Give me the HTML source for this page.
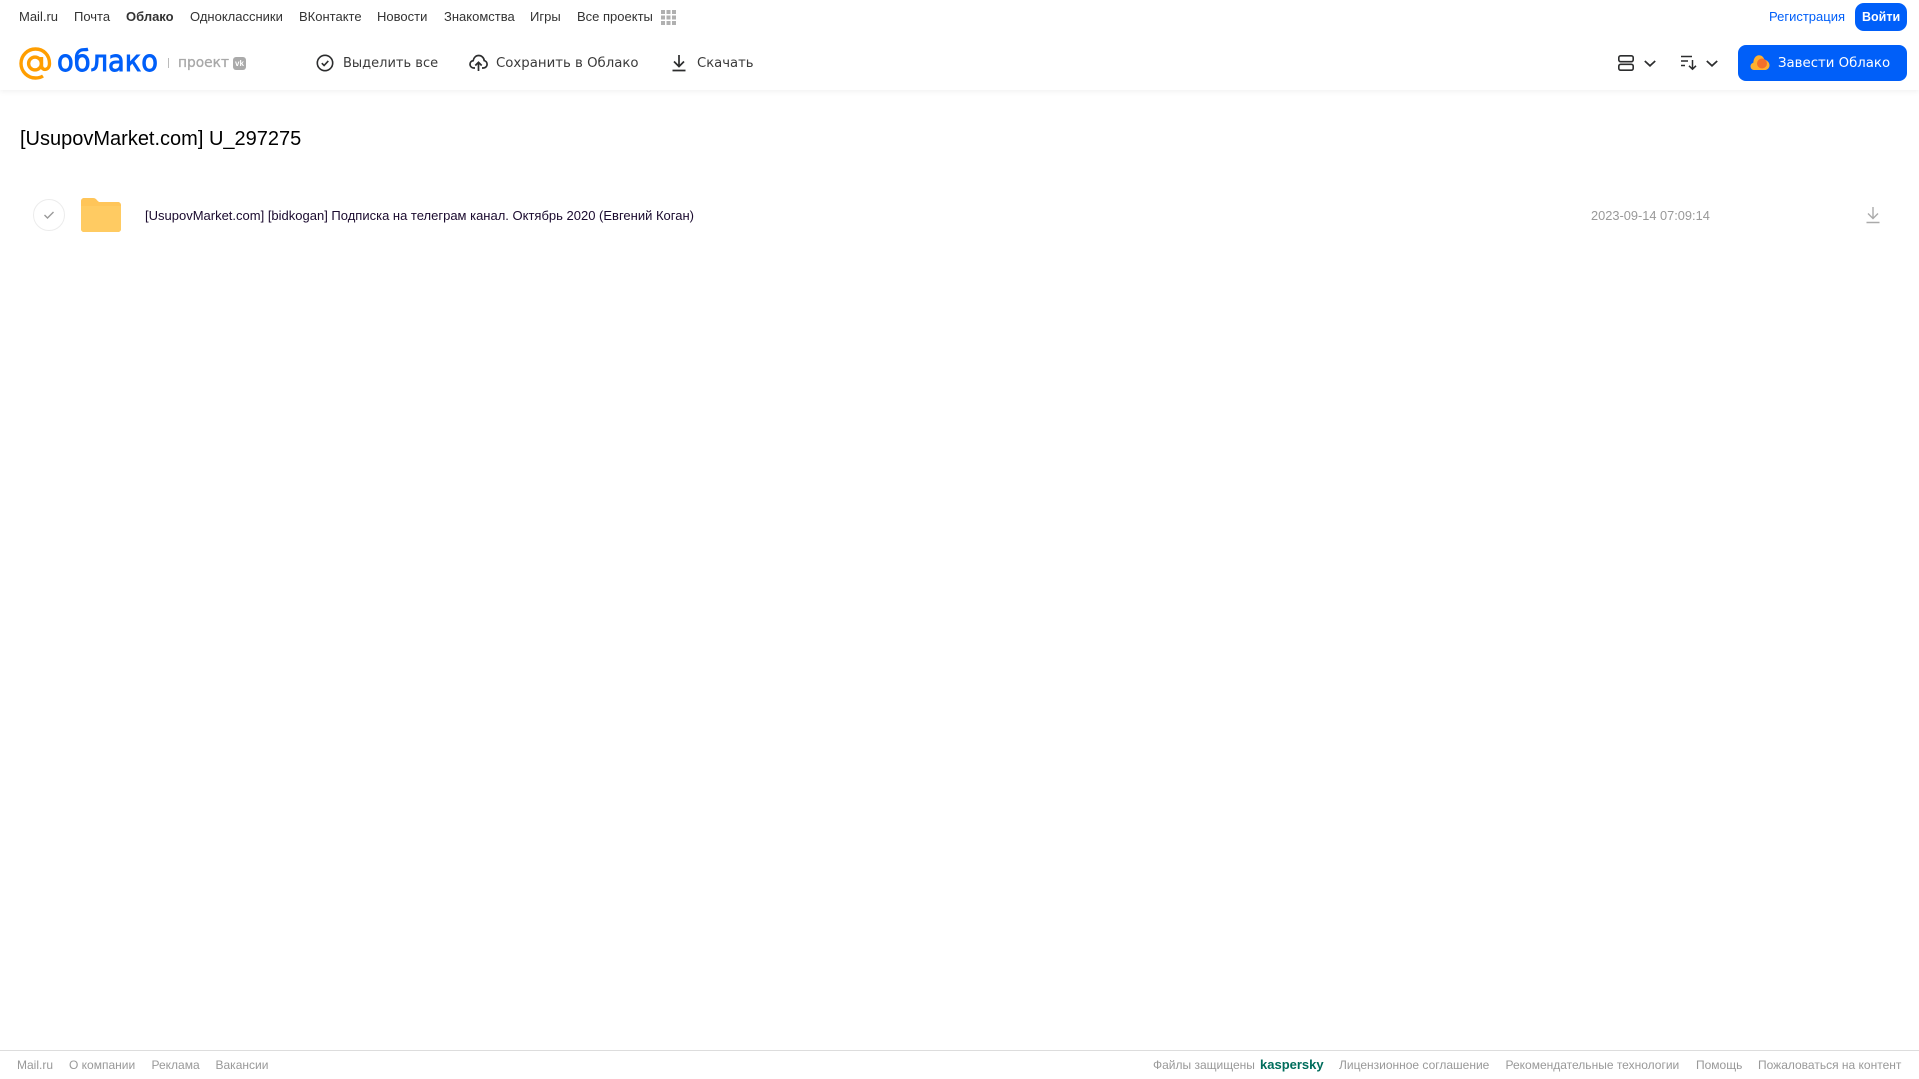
<!DOCTYPE html>
<html lang="ru"><head><meta charset="utf-8"><title>Облако</title>
<style>
html,body{margin:0;padding:0;background:#fff;width:1919px;height:1079px;overflow:hidden}
body{position:relative;font-family:"Liberation Sans",Arial,sans-serif}
.t{position:absolute;white-space:nowrap;line-height:16px}
.n{top:9px;font-size:13px;color:#333}
.b{top:56px;color:#3a3a3a;font-family:"DejaVu Sans",sans-serif;font-size:13.1px}
.f{top:1057px;font-size:12px;color:#999}
svg{position:absolute;overflow:visible}
</style></head><body>
<div style="position:absolute;left:0;top:0;width:1919px;height:90px;background:#fff;box-shadow:0 1px 6px rgba(0,0,0,.07)"></div>

<span class="t n" style="left:19px">Mail.ru</span>
<span class="t n" style="left:74px">Почта</span>
<span class="t n" style="left:126px;font-weight:bold">Облако</span>
<span class="t n" style="left:190px">Одноклассники</span>
<span class="t n" style="left:299px">ВКонтакте</span>
<span class="t n" style="left:377px">Новости</span>
<span class="t n" style="left:444px">Знакомства</span>
<span class="t n" style="left:530px">Игры</span>
<span class="t n" style="left:577px">Все проекты</span>
<svg style="left:661px;top:10px" width="15" height="15" fill="#b0b0b0"><rect x="0" y="0" width="4" height="4"/><rect x="5.500" y="0" width="4" height="4"/><rect x="11" y="0" width="4" height="4"/><rect x="0" y="5.500" width="4" height="4"/><rect x="5.500" y="5.500" width="4" height="4"/><rect x="11" y="5.500" width="4" height="4"/><rect x="0" y="11" width="4" height="4"/><rect x="5.500" y="11" width="4" height="4"/><rect x="11" y="11" width="4" height="4"/></svg>

<span class="t n" style="left:1769px;color:#005ff9">Регистрация</span>
<div style="position:absolute;left:1855px;top:3px;width:52px;height:28px;border-radius:9px;background:#005ff9"></div>
<span class="t n" style="left:1862px;color:#fff;font-weight:bold;font-size:12.500px">Войти</span>

<svg style="left:19px;top:47px" width="33" height="33" viewBox="0 0 33 33" fill="none" stroke="#ff9e00" stroke-width="3.400"><circle cx="16" cy="16.500" r="6.400"/><path d="M22.500 10v8.500c0 5.500 8 5.500 8-2C30.500 8 24.500 2 16.500 2S2 8.500 2 16.500 8.500 31 16.500 31c3 0 5.500-.7 7.500-2"/></svg>
<svg style="left:56px;top:44px" width="106" height="36"><text x="1" y="27" font-family="DejaVu Sans,sans-serif" font-size="29" fill="#005ff9" stroke="#005ff9" stroke-width=".9" textLength="101" lengthAdjust="spacingAndGlyphs">облако</text></svg>
<div style="position:absolute;left:168px;top:58px;width:1px;height:10px;background:#bbb"></div>
<svg style="left:178px;top:54px" width="52" height="18"><text x="0" y="13" font-family="DejaVu Sans,sans-serif" font-size="14" fill="#a8a8a8" stroke="#a8a8a8" stroke-width=".3" textLength="51" lengthAdjust="spacingAndGlyphs">проект</text></svg>
<div style="position:absolute;left:233px;top:57px;width:13px;height:13px;border-radius:3px;background:#aaa;color:#fff;font:bold 8px/13px 'Liberation Sans',sans-serif;text-align:center">vk</div>

<svg style="left:316px;top:54px" width="18" height="18" viewBox="0 0 18 18" fill="none" stroke="#2c2d2e" stroke-width="1.600"><circle cx="9" cy="9" r="7.700"/><path d="M5.800 9.200l2.300 2.300 4.200-4.600"/></svg>
<span class="t b" style="left:343px;font-size:13px">Выделить все</span>

<svg style="left:469px;top:54px" width="19" height="18" viewBox="0 0 19 18" fill="none" stroke="#2c2d2e" stroke-width="1.700"><path d="M6 14H4.800C2.700 14 1 12.400 1 10.300c0-1.900 1.400-3.400 3.200-3.700C4.800 3.400 7 1.500 9.700 1.500c2.900 0 5.300 2.200 5.500 5.100 1.700.4 2.900 1.900 2.900 3.700 0 2-1.600 3.700-3.700 3.700H13"/><path d="M9.500 17V8.500M6.300 11.500l3.200-3.200 3.200 3.200"/></svg>
<span class="t b" style="left:496px;font-size:13.300px">Сохранить в Облако</span>

<svg style="left:672px;top:54px" width="14" height="18" viewBox="0 0 14 18" fill="none" stroke="#2c2d2e" stroke-width="1.700"><path d="M7 1v11M2 7.500l5 5 5-5M.5 16.500h13"/></svg>
<span class="t b" style="left:697px;font-size:13.200px">Скачать</span>

<svg style="left:1618px;top:55px" width="16" height="16" viewBox="0 0 16 16" fill="none" stroke="#2c2d2e" stroke-width="1.600"><rect x=".8" y=".8" width="14.400" height="5.900" rx="1.800"/><rect x=".8" y="9.300" width="14.400" height="5.900" rx="1.800"/></svg>
<svg style="left:1644px;top:60px" width="12" height="7" fill="none" stroke="#2c2d2e" stroke-width="1.700"><path d="M.8 1l5.200 4.800L11.200 1"/></svg>
<svg style="left:1681px;top:55px" width="16" height="15" fill="none" stroke="#2c2d2e" stroke-width="1.500"><path d="M0 1.500h11M0 6h7M0 10.500h4M11.500 5v9M8 10.800l3.500 3.400 3.500-3.400"/></svg>
<svg style="left:1706px;top:60px" width="12" height="7" fill="none" stroke="#2c2d2e" stroke-width="1.700"><path d="M.8 1l5.200 4.800L11.200 1"/></svg>

<div style="position:absolute;left:1738px;top:45px;width:169px;height:36px;border-radius:8px;background:#005ff9"></div>
<svg style="left:1750px;top:54px" width="20" height="17" viewBox="0 0 20 17"><path d="M4 16C1.800 16 .5 14.300.5 12.300c0-1.800 1.200-3.200 2.800-3.600C3.500 4.500 5.800 1.200 9 1.200c2.900 0 4.800 2 5.300 4.500 2.800.2 5.200 2.800 5.200 5.500 0 2.800-2.200 4.800-5 4.800z" fill="#ffb02e"/><circle cx="12" cy="9.500" r="5" fill="#f4702a"/></svg>
<span class="t b" style="left:1778px;color:#fff;font-size:13.300px">Завести Облако</span>

<span class="t" style="left:20px;top:127px;font-size:20px;line-height:24px;color:#000">[UsupovMarket.com] U_297275</span>

<div style="position:absolute;left:33px;top:199px;width:30px;height:30px;border:1px solid #ececec;border-radius:50%"></div>
<svg style="left:43px;top:210px" width="12" height="10" fill="none" stroke="#999" stroke-width="1.400"><path d="M1.500 5l3 3 6-6"/></svg>
<svg style="left:81px;top:198px" width="40" height="34" viewBox="0 0 40 34"><path d="M3 0h9c2 0 3 .8 4 2.200L18 4h19c1.700 0 3 1.300 3 3v24c0 1.700-1.300 3-3 3H3c-1.700 0-3-1.300-3-3V3c0-1.700 1.300-3 3-3z" fill="#ffc559"/><path d="M0 8h40v23c0 1.700-1.300 3-3 3H3c-1.700 0-3-1.300-3-3z" fill="#ffcb62"/></svg>
<span class="t" style="left:145px;top:208px;font-size:13px;color:#1a0a2e">[UsupovMarket.com] [bidkogan] Подписка на телеграм канал. Октябрь 2020 (Евгений Коган)</span>
<span class="t" style="left:1591px;top:208px;font-size:12.800px;color:#999">2023-09-14 07:09:14</span>
<svg style="left:1866px;top:206px" width="14" height="18" viewBox="0 0 14 18" fill="none" stroke="#aaa" stroke-width="1.400"><path d="M7 1v11M2 7.500l5 5 5-5M.5 16.500h13"/></svg>

<div style="position:absolute;left:0;top:1050px;width:1919px;height:1px;background:#ddd"></div>
<span class="t f" style="left:17px">Mail.ru</span>
<span class="t f" style="left:69px">О компании</span>
<span class="t f" style="left:151.500px">Реклама</span>
<span class="t f" style="left:215.500px">Вакансии</span>
<span class="t f" style="left:1153px">Файлы защищены</span>
<span class="t f" style="left:1260px;color:#006d5c;font-weight:bold;font-size:13px">kaspersky</span>
<span class="t f" style="left:1339px">Лицензионное соглашение</span>
<span class="t f" style="left:1505.500px">Рекомендательные технологии</span>
<span class="t f" style="left:1696px">Помощь</span>
<span class="t f" style="left:1758px">Пожаловаться на контент</span>
</body></html>
